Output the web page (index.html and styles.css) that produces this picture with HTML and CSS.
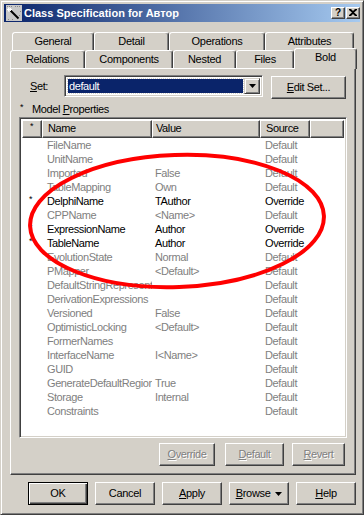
FILE: index.html
```html
<!DOCTYPE html>
<html lang="en">
	<head>
		<meta charset="UTF-8" />
		<title>Class Specification for Автор</title>
		<link rel="stylesheet" href="styles.css">
	</head>
	<body>
		<div class="window">
			<div class="titlebar">
				<svg class="app-icon" width="16" height="16" viewBox="0 0 16 16">
					<rect width="16" height="16" fill="#c8c8c8" />
					<path d="M1 1h1v1H1zM3 1h1v1H3zM5 1h1v1H5zM9 1h1v1H9zM11 1h1v1h-1zM13 1h1v1h-1zM2 14h1v1H2zM6 14h1v1H6zM13 10h1v1h-1zM14 6h1v1h-1z" fill="#888" />
					<path d="M4.5 5.5l8 8" stroke="#000" stroke-width="2" />
					<path d="M3 2v5M1 4.5h5M2 3l3 3M5 3l-3 3" stroke="#fff" stroke-width="1" />
				</svg>
				<span class="title">Class Specification for Автор</span>
				<div class="caption-btn">?</div>
				<div class="caption-btn close">
					<svg width="8" height="7" viewBox="0 0 8 7">
						<path d="M0 0h2l2 2 2-2h2v1L5 3.5 8 6v1H6L4 5 2 7H0V6l3-2.5L0 1z" fill="#000" />
					</svg>
				</div>
			</div>

			<div class="tabs">
				<div class="tabrow r1">
					<div class="tab" style="width: 82px">General</div>
					<div class="tab" style="width: 75px">Detail</div>
					<div class="tab" style="width: 96px">Operations</div>
					<div class="tab" style="width: 89px">Attributes</div>
				</div>
				<div class="tabrow r2">
					<div class="tab" style="width: 75px">Relations</div>
					<div class="tab" style="width: 88px">Components</div>
					<div class="tab" style="width: 63px">Nested</div>
					<div class="tab" style="width: 58px">Files</div>
					<div class="tab active" style="width: 63px">Bold</div>
				</div>
			</div>

			<div class="panel">
				<div class="set-row">
					<span class="set-label"><u>S</u>et:</span>
					<div class="combo">
						<div class="combo-text"><span>default</span></div>
						<div class="combo-btn">
							<svg width="7" height="4" viewBox="0 0 7 4"><path d="M0 0h7L3.5 4z" fill="#000" /></svg>
						</div>
					</div>
					<div class="btn edit-set"><u>E</u>dit Set...</div>
				</div>

				<div class="props-label"><span class="star">*</span>Model <u>P</u>roperties</div>

				<div class="grid">
					<div class="grid-head">
						<div class="hcell c-mk"><span class="star">*</span></div>
						<div class="hcell c-nm">Name</div>
						<div class="hcell c-vl">Value</div>
						<div class="hcell c-src">Source</div>
						<div class="hcell c-fill"></div>
					</div>
					<div class="grid-body">
						<div class="row"><span class="mk"></span><span class="nm">FileName</span><span class="vl"></span><span class="src">Default</span></div>
						<div class="row"><span class="mk"></span><span class="nm">UnitName</span><span class="vl"></span><span class="src">Default</span></div>
						<div class="row"><span class="mk"></span><span class="nm">Imported</span><span class="vl">False</span><span class="src">Default</span></div>
						<div class="row"><span class="mk"></span><span class="nm">TableMapping</span><span class="vl">Own</span><span class="src">Default</span></div>
						<div class="row set"><span class="mk">*</span><span class="nm">DelphiName</span><span class="vl">TAuthor</span><span class="src">Override</span></div>
						<div class="row"><span class="mk"></span><span class="nm">CPPName</span><span class="vl">&lt;Name&gt;</span><span class="src">Default</span></div>
						<div class="row set"><span class="mk">*</span><span class="nm">ExpressionName</span><span class="vl">Author</span><span class="src">Override</span></div>
						<div class="row set"><span class="mk">*</span><span class="nm">TableName</span><span class="vl">Author</span><span class="src">Override</span></div>
						<div class="row"><span class="mk"></span><span class="nm">EvolutionState</span><span class="vl">Normal</span><span class="src">Default</span></div>
						<div class="row"><span class="mk"></span><span class="nm">PMapper</span><span class="vl">&lt;Default&gt;</span><span class="src">Default</span></div>
						<div class="row"><span class="mk"></span><span class="nm">DefaultStringRepresentation</span><span class="vl"></span><span class="src">Default</span></div>
						<div class="row"><span class="mk"></span><span class="nm">DerivationExpressions</span><span class="vl"></span><span class="src">Default</span></div>
						<div class="row"><span class="mk"></span><span class="nm">Versioned</span><span class="vl">False</span><span class="src">Default</span></div>
						<div class="row"><span class="mk"></span><span class="nm">OptimisticLocking</span><span class="vl">&lt;Default&gt;</span><span class="src">Default</span></div>
						<div class="row"><span class="mk"></span><span class="nm">FormerNames</span><span class="vl"></span><span class="src">Default</span></div>
						<div class="row"><span class="mk"></span><span class="nm">InterfaceName</span><span class="vl">I&lt;Name&gt;</span><span class="src">Default</span></div>
						<div class="row"><span class="mk"></span><span class="nm">GUID</span><span class="vl"></span><span class="src">Default</span></div>
						<div class="row"><span class="mk"></span><span class="nm">GenerateDefaultRegion</span><span class="vl">True</span><span class="src">Default</span></div>
						<div class="row"><span class="mk"></span><span class="nm">Storage</span><span class="vl">Internal</span><span class="src">Default</span></div>
						<div class="row"><span class="mk"></span><span class="nm">Constraints</span><span class="vl"></span><span class="src">Default</span></div>
					</div>
				</div>

				<div class="grid-actions">
					<div class="btn disabled b-override"><u>O</u>verride</div>
					<div class="btn disabled b-default"><u>D</u>efault</div>
					<div class="btn disabled b-revert"><u>R</u>evert</div>
				</div>
			</div>

			<div class="dialog-actions">
				<div class="btn default">OK</div>
				<div class="btn">Cancel</div>
				<div class="btn"><u>A</u>pply</div>
				<div class="btn"><u>B</u>rowse <svg class="menu-arrow" width="7" height="4" viewBox="0 0 7 4"><path d="M0 0h7L3.5 4z" fill="#000" /></svg></div>
				<div class="btn"><u>H</u>elp</div>
			</div>

			<!-- hand-drawn highlight over the overridden rows -->
			<svg class="mark" width="364" height="515" viewBox="0 0 364 515">
				<ellipse cx="176" cy="220" rx="147" ry="66" transform="rotate(-2 176 220)" fill="none" stroke="#ff0000" stroke-width="4" />
			</svg>
		</div>
	</body>
</html>
```

FILE: styles.css
```css
body {
	margin: 0;
	background: #d4d0c8;
	font-family: 'Liberation Sans', Arial, sans-serif;
	font-size: 11px;
	color: #000;
}
.window {
	position: relative;
	width: 364px;
	height: 515px;
	box-sizing: border-box;
	padding: 3px;
	background: #d4d0c8;
	border: 1px solid;
	border-color: #d4d0c8 #404040 #404040 #d4d0c8;
	box-shadow: inset 1px 1px #fff, inset -1px -1px #808080;
	overflow: hidden;
}
.titlebar {
	display: flex;
	align-items: center;
	height: 18px;
	padding-left: 2px;
	background: linear-gradient(to right, #0a246a, #a6caf0);
	color: #fff;
}
.app-icon {
	display: block;
	margin-right: 2px;
}
.title {
	flex: 1;
	font-weight: bold;
	font-size: 11px;
	white-space: nowrap;
}
.caption-btn {
	width: 14px;
	height: 12px;
	box-sizing: border-box;
	margin-left: 1px;
	background: #d4d0c8;
	border: 1px solid;
	border-color: #fff #404040 #404040 #fff;
	box-shadow: inset -1px -1px #808080;
	color: #000;
	font-weight: bold;
	font-size: 10px;
	line-height: 10px;
	text-align: center;
}
.caption-btn.close {
	display: flex;
	align-items: center;
	justify-content: center;
	padding-bottom: 1px;
}

/* tab strip */
.tabs {
	margin-top: 10px;
}
.tabrow {
	display: flex;
	align-items: flex-end;
	height: 18px;
}
.tabrow.r1 {
	margin-left: 8px;
}
.tabrow.r2 {
	margin-left: 6px;
}
.tab {
	box-sizing: border-box;
	height: 18px;
	border: 1px solid;
	border-bottom: none;
	border-color: #fff #404040 transparent #fff;
	border-radius: 3px 3px 0 0;
	box-shadow: inset -1px 0 #808080;
	background: #d4d0c8;
	text-align: center;
	line-height: 17px;
	letter-spacing: -0.3px;
	white-space: nowrap;
}
.tab.active {
	position: relative;
	z-index: 1;
	height: 21px;
	margin-bottom: -1px;
	line-height: 16px;
}

/* tab page */
.panel {
	width: 346px;
	height: 407px;
	margin-left: 6px;
	box-sizing: border-box;
	padding: 6px 0 0 8px;
	border: 1px solid;
	border-color: #fff #404040 #404040 #fff;
	box-shadow: inset -1px -1px #808080;
	letter-spacing: -0.4px;
}
.set-row {
	display: flex;
	align-items: flex-start;
	height: 24px;
	padding-left: 11px;
}
.set-label {
	width: 34px;
	line-height: 22px;
}
.combo {
	display: flex;
	width: 199px;
	height: 22px;
	box-sizing: border-box;
	padding: 2px;
	background: #fff;
	border: 1px solid;
	border-color: #808080 #fff #fff #808080;
	box-shadow: inset 1px 1px #404040, inset -1px -1px #d4d0c8;
}
.combo-text {
	flex: 1;
	padding: 1px;
}
.combo-text span {
	display: block;
	height: 14px;
	line-height: 14px;
	padding-left: 1px;
	background: #0a246a;
	color: #fff;
	outline: 1px dotted #d4d0c8;
}
.combo-btn {
	display: flex;
	align-items: center;
	justify-content: center;
	width: 16px;
	box-sizing: border-box;
	background: #d4d0c8;
	border: 1px solid;
	border-color: #d4d0c8 #404040 #404040 #d4d0c8;
	box-shadow: inset 1px 1px #fff, inset -1px -1px #808080;
}
.btn {
	box-sizing: border-box;
	height: 23px;
	background: #d4d0c8;
	border: 1px solid;
	border-color: #fff #404040 #404040 #fff;
	box-shadow: inset -1px -1px #808080;
	text-align: center;
	line-height: 20px;
	white-space: nowrap;
}
.btn.edit-set {
	width: 75px;
	margin: 1px 0 0 8px;
}
.btn.disabled {
	color: #808080;
	text-shadow: 1px 1px #fff;
}
.btn.default {
	border: 1px solid #000;
	box-shadow: inset 1px 1px #fff, inset -1px -1px #404040, inset -2px -2px #808080;
}
.props-label {
	height: 14px;
	line-height: 14px;
	margin-top: 3px;
	padding-left: 1px;
}
.star {
	display: inline-block;
	width: 12px;
	font-size: 9px;
	vertical-align: top;
	line-height: 11px;
}

/* property grid */
.grid {
	display: flex;
	flex-direction: column;
	width: 328px;
	height: 321px;
	margin-top: 1px;
	box-sizing: border-box;
	padding: 2px;
	border: 1px solid;
	border-color: #808080 #fff #fff #808080;
	box-shadow: inset 1px 1px #404040, inset -1px -1px #d4d0c8;
	background: #fff;
}
.grid-head {
	display: flex;
	height: 18px;
	background: #d4d0c8;
}
.hcell {
	box-sizing: border-box;
	height: 18px;
	border: 1px solid;
	border-color: #fff #404040 #404040 #fff;
	box-shadow: inset -1px -1px #808080;
	line-height: 15px;
	white-space: nowrap;
}
.c-mk {
	width: 20px;
	padding-left: 7px;
}
.c-nm {
	width: 110px;
	padding-left: 5px;
}
.c-vl {
	width: 108px;
	padding-left: 3px;
}
.c-src {
	width: 50px;
	padding-left: 5px;
}
.c-fill {
	flex: 1;
}
.grid-body {
	flex: 1;
}
.row {
	display: grid;
	grid-template-columns: 20px 110px 108px 50px;
	height: 14px;
	line-height: 14px;
	color: #808080;
	white-space: nowrap;
}
.row.set {
	color: #000;
}
.row span {
	overflow: hidden;
}
.row .mk {
	padding-left: 7px;
	font-size: 9px;
	line-height: 11px;
}
.row .nm {
	padding-left: 5px;
}
.row .vl {
	padding-left: 3px;
}
.row .src {
	padding-left: 5px;
	overflow: visible;
}
.grid-actions {
	display: flex;
	justify-content: flex-end;
	width: 326px;
	margin-top: 5px;
}
.b-override {
	width: 56px;
}
.b-default {
	width: 59px;
	margin-left: 10px;
}
.b-revert {
	width: 53px;
	margin-left: 8px;
}

/* OK / Cancel row */
.dialog-actions {
	display: flex;
	gap: 7px;
	margin: 7px 0 0 24px;
	letter-spacing: -0.3px;
}
.dialog-actions .btn {
	width: 60px;
}
.menu-arrow {
	margin-left: 2px;
	vertical-align: middle;
}
.mark {
	position: absolute;
	left: 0;
	top: 0;
	pointer-events: none;
}
```
